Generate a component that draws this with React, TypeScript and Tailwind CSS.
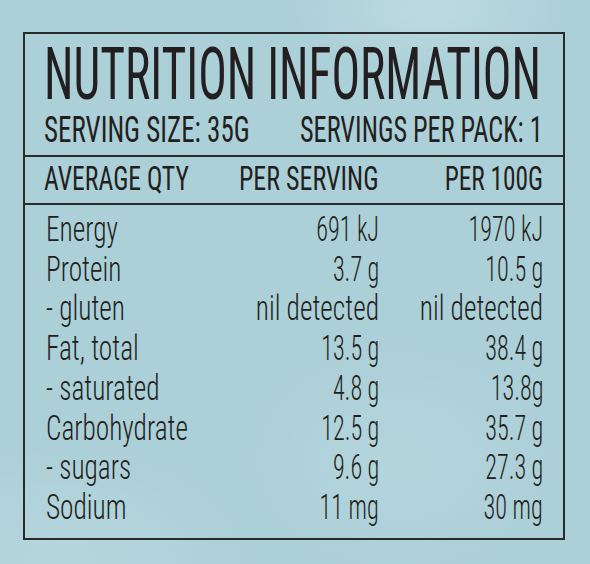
const rows = [
  { label: 'Energy', serving: '691 kJ', per100: '1970 kJ' },
  { label: 'Protein', serving: '3.7 g', per100: '10.5 g' },
  { label: '- gluten', serving: 'nil detected', per100: 'nil detected' },
  { label: 'Fat, total', serving: '13.5 g', per100: '38.4 g' },
  { label: '- saturated', serving: '4.8 g', per100: '13.8g' },
  { label: 'Carbohydrate', serving: '12.5 g', per100: '35.7 g' },
  { label: '- sugars', serving: '9.6 g', per100: '27.3 g' },
  { label: 'Sodium', serving: '11 mg', per100: '30 mg' },
];

function Value({ text }: { text: string }) {
  const isWord = text === 'nil detected';
  return (
    <div className="flex justify-end">
      <span
        className={
          isWord
            ? 'inline-block whitespace-nowrap origin-right scale-x-[0.78]'
            : 'inline-block whitespace-nowrap origin-right scale-x-[0.69]'
        }
      >
        {text}
      </span>
    </div>
  );
}

export default function App() {
  return (
    <div className="w-[590px] h-[564px] overflow-hidden bg-[#acd0d8] bg-[radial-gradient(ellipse_140px_60px_at_430px_10px,rgba(255,255,255,0.22),transparent),radial-gradient(ellipse_200px_120px_at_60px_560px,rgba(255,255,255,0.12),transparent),radial-gradient(ellipse_160px_120px_at_400px_460px,rgba(255,255,255,0.1),transparent)] pt-[32px] pl-[23px] text-[#231f20] [font-family:Roboto,'Liberation_Sans',sans-serif] [font-stretch:75%]">
      <div className="w-[542px] border-2 border-[#2b2a2b]">
        {/* title block */}
        <div className="pl-[19px] pr-[20px] pt-[4px] pb-[6px] border-b-2 border-[#2b2a2b]">
          <div className="text-[73px] leading-[73px] font-[450] whitespace-nowrap">
            <span className="inline-block origin-left scale-x-[0.652]">NUTRITION INFORMATION</span>
          </div>
          <div className="flex text-[37.5px] leading-[37.5px] font-normal whitespace-nowrap">
            <div className="w-1/2">
              <span className="inline-block origin-left scale-x-[0.72]">SERVING SIZE: 35G</span>
            </div>
            <div className="w-1/2 flex justify-end">
              <span className="inline-block origin-right scale-x-[0.7]">SERVINGS PER PACK: 1</span>
            </div>
          </div>
        </div>

        {/* column headings */}
        <div className="grid grid-cols-[minmax(0,1fr)_150px_164px] pl-[19px] pr-[20px] pt-[4px] pb-[8px] border-b-2 border-[#2b2a2b] text-[34px] leading-[34px] font-normal whitespace-nowrap">
          <div>
            <span className="inline-block origin-left scale-x-[0.755]">AVERAGE QTY</span>
          </div>
          <div className="flex justify-end">
            <span className="inline-block origin-right scale-x-[0.765]">PER SERVING</span>
          </div>
          <div className="flex justify-end">
            <span className="inline-block origin-right scale-x-[0.745]">PER 100G</span>
          </div>
        </div>

        {/* nutrient rows */}
        <div className="grid grid-cols-[minmax(0,1fr)_150px_164px] pl-[21px] pr-[20px] pt-[5.5px] pb-[10px] text-[35px] leading-[39.7px] font-[320]">
          {rows.map((row) => (
            <div key={row.label} className="contents">
              <div className="whitespace-nowrap">
                <span className="inline-block origin-left scale-x-[0.78]">{row.label}</span>
              </div>
              <Value text={row.serving} />
              <Value text={row.per100} />
            </div>
          ))}
        </div>
      </div>
    </div>
  );
}
